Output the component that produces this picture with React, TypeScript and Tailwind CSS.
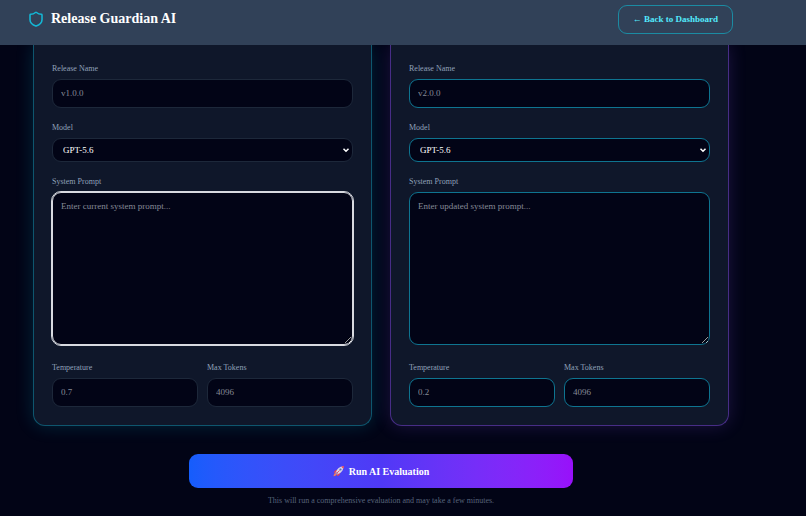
import type { ReactNode } from 'react';

const field =
  'block w-full rounded-[9px] border bg-[#020416] px-2 text-[9px] leading-[15px] text-white placeholder:text-[#868a96]';

const tones = {
  slate: 'border-[#1d283a]',
  cyan: 'border-[#0e7490]',
};

type PanelProps = {
  id: string;
  tone: keyof typeof tones;
  className: string;
  release: string;
  prompt: string;
  promptClass: string;
  temperature: string;
};

function ShieldIcon() {
  return (
    <svg
      className="size-4 text-[#14b8d6]"
      viewBox="0 0 24 24"
      fill="none"
      stroke="currentColor"
      strokeWidth="2.3"
      strokeLinecap="round"
      strokeLinejoin="round"
    >
      <path d="M21 13c0 5-3.5 7.500-8.660 9.450a1 1 0 0 1-.67-.010C6.500 20.500 3 18 3 13V6a1 1 0 0 1 1-1c2 0 5.500-1.200 7.240-2.720a1.170 1.170 0 0 1 1.520 0C14.510 3.810 18 5 20 5a1 1 0 0 1 1 1z" />
    </svg>
  );
}

function RocketIcon() {
  return (
    <svg className="size-3" viewBox="0 0 24 24">
      <path d="M9 9 3.500 11.500 1.500 16l6-1zM15 15l-2.500 5.500L8 22.500l1-6z" fill="#e8414f" />
      <path d="M5 16c-2 .5-3.500 3-4 6.500 3.500-.5 6-2 6.500-4z" fill="#f4795b" />
      <path d="M6 14C8 8 13 3 21 2.500 21 11 16 16 10 18z" fill="#d9d5e6" />
      <path d="M16.500 3.500C18 2.800 20 2.400 22 2c-.2 2-.6 4-1.400 5.600z" fill="#ef4759" />
      <path d="m5.500 13.500 5 5-2 1-4-4z" fill="#a9a3c4" />
      <circle cx="15" cy="9" r="2.200" fill="#5a6fb8" />
      <path d="m8 16 4.500-4.500" stroke="#e8414f" strokeWidth="1.800" strokeLinecap="round" />
    </svg>
  );
}

function Field({ id, label, children }: { id: string; label: string; children: ReactNode }) {
  return (
    <div>
      <label htmlFor={id} className="mb-1 block text-[8px] leading-3 text-[#90a1b9]">
        {label}
      </label>
      {children}
    </div>
  );
}

function Panel({ id, tone, className, release, prompt, promptClass, temperature }: PanelProps) {
  const border = tones[tone];

  return (
    <section className={`rounded-b-xl border border-t-0 bg-[#0f172a] p-[18px] ${className}`}>
      <div className="flex flex-col gap-[14px]">
        <Field id={`${id}-release`} label="Release Name">
          <input id={`${id}-release`} type="text" placeholder={release} className={`${field} ${border} py-[6px]`} />
        </Field>

        <Field id={`${id}-model`} label="Model">
          <div className="relative">
            <select id={`${id}-model`} className={`${field} ${border} h-6 appearance-none pl-[10px]`}>
              <option>GPT-5.6</option>
            </select>
            <svg
              className="pointer-events-none absolute inset-y-0 right-[3px] my-auto size-2 text-white"
              viewBox="0 0 8 8"
              fill="none"
              stroke="currentColor"
              strokeWidth="1.5"
            >
              <path d="m1.500 2.800 2.500 2.500 2.500-2.500" />
            </svg>
          </div>
        </Field>

        <Field id={`${id}-prompt`} label="System Prompt">
          <textarea
            id={`${id}-prompt`}
            placeholder={prompt}
            className={`${field} h-[153px] resize-y py-[6px] ${promptClass}`}
          />
        </Field>
      </div>

      <div className="mt-[17px] grid grid-cols-2 gap-[9px]">
        <Field id={`${id}-temperature`} label="Temperature">
          <input id={`${id}-temperature`} type="text" placeholder={temperature} className={`${field} ${border} py-[6px]`} />
        </Field>
        <Field id={`${id}-tokens`} label="Max Tokens">
          <input id={`${id}-tokens`} type="text" placeholder="4096" className={`${field} ${border} py-[6px]`} />
        </Field>
      </div>
    </section>
  );
}

export default function App() {
  return (
    <div className="min-h-screen overflow-hidden bg-[#020416] font-['Liberation_Serif','Times_New_Roman',serif] scheme-dark">
      <header className="relative z-10 flex items-start justify-between bg-[#314158] pt-[5px] pr-[73px] pb-[11px] pl-[28px]">
        <div className="flex h-7 items-center gap-[7px]">
          <ShieldIcon />
          <h1 className="text-[14px] leading-5 font-bold text-white">Release Guardian AI</h1>
        </div>
        <a
          href="#dashboard"
          className="flex h-[29px] items-center rounded-[9px] border border-[#1b8ba3] px-[14px] text-[9px] font-bold text-[#53eafd]"
        >
          ← Back to Dashboard
        </a>
      </header>

      <main className="pr-[77px] pl-[33px]">
        <div className="grid grid-cols-2 gap-[18px]">
          <Panel
            id="current"
            tone="slate"
            className="border-[#0e566e] shadow-[0_0_18px_rgba(6,182,212,0.2)]"
            release="v1.0.0"
            prompt="Enter current system prompt..."
            promptClass="border-[#d8dae0] outline outline-[#d8dae0]"
            temperature="0.7"
          />
          <Panel
            id="updated"
            tone="cyan"
            className="border-[#472d86] shadow-[0_0_18px_rgba(139,92,246,0.2)]"
            release="v2.0.0"
            prompt="Enter updated system prompt..."
            promptClass="border-[#0e7490]"
            temperature="0.2"
          />
        </div>

        <div className="mt-7 flex flex-col items-center">
          <button
            type="button"
            className="flex h-[34px] w-full max-w-96 items-center justify-center gap-1 rounded-[9px] bg-linear-to-r from-[#155dfc] via-[#4f39f6] to-[#9810fa] text-[10px] font-bold text-white"
          >
            <RocketIcon />
            Run AI Evaluation
          </button>
          <p className="mt-[7px] text-[8px] leading-3 text-[#56637a]">
            This will run a comprehensive evaluation and may take a few minutes.
          </p>
        </div>
      </main>
    </div>
  );
}
